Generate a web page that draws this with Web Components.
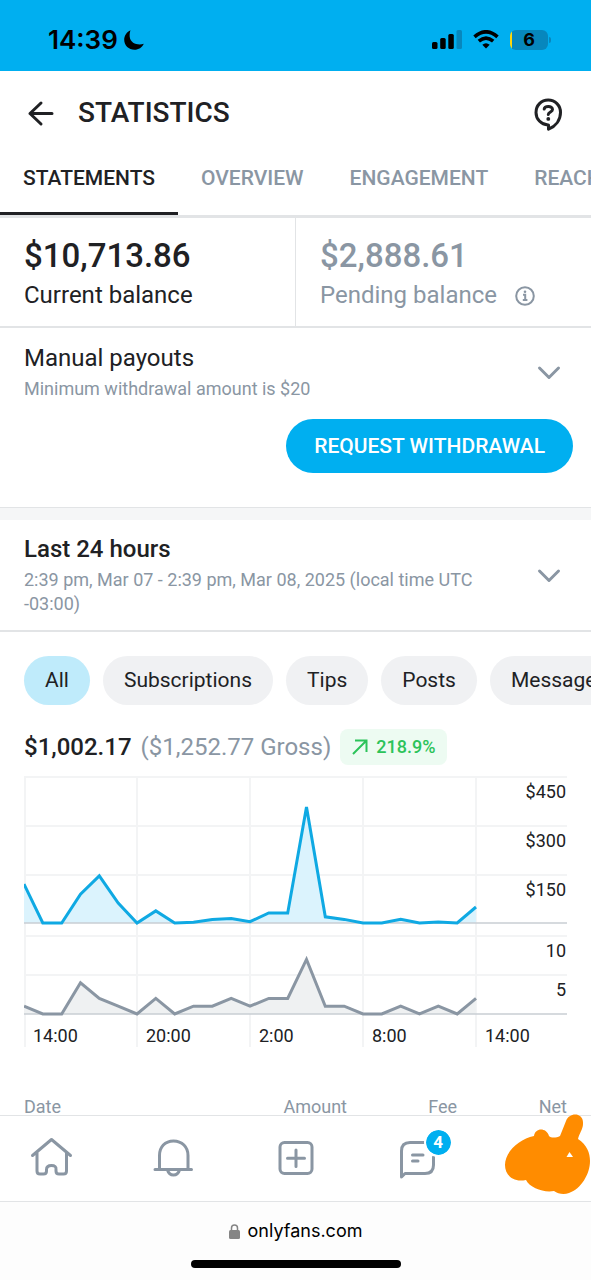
<!DOCTYPE html>
<html lang="en">
<head>
<meta charset="utf-8">
<meta name="viewport" content="width=device-width, initial-scale=1">
<title>Statistics</title>
<style>
  :root {
    --ink: #202124;
    --muted: #8a96a3;
    --line: #e2e4e6;
    --brand: #00aff0;
    --gutter: 24px;
  }
  body {
    margin: 0;
    font-family: Roboto, "Liberation Sans", sans-serif;
    color: var(--ink);
    background: #fff;
  }
</style>
</head>
<body>
<stats-app></stats-app>

<script>
const define = (name, markup, setup) => {
  const template = document.createElement('template');
  template.innerHTML = markup;
  customElements.define(name, class extends HTMLElement {
    constructor() {
      super();
      this.attachShadow({ mode: 'open' }).append(template.content.cloneNode(true));
    }
    connectedCallback() {
      if (setup) setup(this, this.shadowRoot);
    }
  });
};

define('status-bar', `
  <style>
    :host { display: flex; align-items: center; justify-content: space-between; height: 71px; box-sizing: border-box;
      padding: 8px 40px 0 48px; background: var(--brand); color: #000; font-family: Inter, sans-serif; }
    .clock, .signals { display: flex; align-items: center; }
    .clock { gap: 5px; font-size: 26px; font-weight: 600; line-height: 32px; }
    .signals { gap: 11px; }
    .battery { display: flex; align-items: center; }
    .cell { width: 38px; height: 20px; border-radius: 6px; background: linear-gradient(to right, #ffd60a 2px, #0787bd 2px);
      font-size: 18px; font-weight: 700; line-height: 20px; text-align: center; }
    .tip { width: 2px; height: 6px; margin-left: 1px; border-radius: 0 2px 2px 0; background: #0787bd; }
    svg { display: block; }
  </style>
  <div class="clock"><span>14:39</span>
    <svg width="22" height="22" viewBox="0 0 22 22"><path d="M7.5 1.2C4 2.700 1.200 6.500 1.200 10.800 1.200 16.600 5.800 20.800 11.500 20.800 15.600 20.800 19.200 18.600 20.800 14.800 15.500 16.400 7.500 15 6.700 7.700 6.500 5.300 6.800 3 7.500 1.200Z"/></svg>
  </div>
  <div class="signals">
    <svg width="30" height="19" viewBox="0 0 30 19"><rect y="12" width="5.500" height="7" rx="1.500"/><rect x="8.200" y="8" width="5.500" height="11" rx="1.500"/><rect x="16.300" y="4" width="5.500" height="15" rx="1.500"/><rect x="24.500" width="5.500" height="19" rx="1.500" fill="#0787bd"/></svg>
    <svg width="26" height="19" viewBox="0 0 26 19" fill="none" stroke="#000" stroke-width="3.600"><path d="M1.500 6.800Q13-3.200 24.500 6.800"/><path d="M5.800 11.200Q13 5 20.200 11.200"/><path d="M13 18.500 9.300 14.800Q13 11.800 16.700 14.800Z" fill="#000" stroke="none"/></svg>
    <div class="battery"><div class="cell">6</div><div class="tip"></div></div>
  </div>
`);

define('page-header', `
  <style>
    :host { display: flex; align-items: center; gap: 22px; height: 84px; padding: 0 var(--gutter); }
    h1 { flex: 1; margin: 0; font-size: 28px; font-weight: 500; line-height: 36px; }
    button { display: flex; padding: 0; border: 0; background: none; color: inherit; }
  </style>
  <button aria-label="Back"><svg width="32" height="32" viewBox="0 0 32 32" fill="none" stroke="currentColor" stroke-width="3" stroke-linecap="round" stroke-linejoin="round"><path d="M28 16.500H6M17 6 6 16.500l11 10.500"/></svg></button>
  <h1><slot></slot></h1>
  <button aria-label="Help"><svg width="38" height="36" viewBox="0 0 38 36" fill="none" stroke="currentColor" stroke-width="3" stroke-linecap="round" stroke-linejoin="round"><path d="M19 30C12 29.500 7 24 7 17.400 7 10.500 12.200 5.100 19.200 5.100S31.500 10.500 31.500 17.400C31.500 24.500 27 31 19.500 34.200V30Z"/><path d="M15.200 14.100C15.500 10.900 23.500 10.300 23.500 14.500 23.500 17 19.400 16.900 19.300 19.500"/><circle cx="19.300" cy="23.900" r="1.900" fill="currentColor" stroke="none"/></svg></button>
`);

define('tab-strip', `
  <style>
    :host { display: flex; overflow: hidden; border-bottom: 3px solid var(--line); }
  </style>
  <slot></slot>
`);

define('tab-link', `
  <style>
    :host { display: block; flex: none; }
    a { display: block; box-sizing: border-box; height: 60px; padding: 8px 23px 0; border-bottom: 3px solid transparent;
      color: var(--muted); font-size: 21px; font-weight: 500; line-height: 30px; text-decoration: none; }
    :host([selected]) a { color: var(--ink); border-color: var(--ink); }
  </style>
  <a href="#"><slot></slot></a>
`);

define('balance-cell', `
  <style>
    :host { display: block; flex: 1; padding: 17px var(--gutter) 12px; color: var(--ink); }
    :host([pending]) { color: var(--muted); border-left: 1px solid var(--line); }
    .sum { font-size: 33px; font-weight: 500; line-height: 42px; }
    .label { display: flex; align-items: center; gap: 18px; font-size: 24px; line-height: 37px; }
    svg { display: none; }
    :host([pending]) svg { display: block; }
  </style>
  <div class="sum"><slot name="sum"></slot></div>
  <div class="label"><slot></slot>
    <svg width="20" height="20" viewBox="0 0 20 20" fill="none" stroke="currentColor" stroke-width="2"><circle cx="10" cy="10" r="8.800"/><path d="M8 8.700h2.200V14M7.800 14h4.600"/><circle cx="10" cy="5.800" r="1.300" fill="currentColor" stroke="none"/></svg>
  </div>
`);

define('fold-row', `
  <style>
    :host { display: block; }
    button { display: flex; align-items: center; gap: 48px; width: 100%; padding: 11px var(--gutter) 14px; border: 0;
      background: none; color: var(--ink); font: inherit; text-align: left; }
    .text { flex: 1; }
    .title { font-size: 24px; line-height: 36px; }
    :host([strong]) .title { font-weight: 500; }
    .note { margin-top: 1px; color: var(--muted); font-size: 18px; line-height: 24px; }
    svg { flex: none; color: var(--muted); margin-right: 6px; padding-top: 5px; }
  </style>
  <button>
    <span class="text"><div class="title"><slot name="title"></slot></div><div class="note"><slot></slot></div></span>
    <svg width="24" height="16" viewBox="0 0 24 16" fill="none" stroke="currentColor" stroke-width="3" stroke-linecap="round" stroke-linejoin="round"><path d="M2.500 3 12 12.500 21.500 3"/></svg>
  </button>
`);

define('pill-button', `
  <style>
    :host { display: block; }
    button { height: 54px; padding: 0 28px; border: 0; border-radius: 27px; background: var(--brand); color: #fff;
      font: 500 21px/52px Roboto, sans-serif; }
  </style>
  <button><slot></slot></button>
`);

define('filter-chip', `
  <style>
    :host { display: block; flex: none; }
    button { display: flex; align-items: flex-start; height: 49px; padding: 0 21px; border: 0; border-radius: 25px; background: #f0f1f3; color: var(--ink);
      font: 400 21px/48px Roboto, sans-serif; white-space: nowrap; }
    :host([selected]) button { background: #bfebfb; }
  </style>
  <button><slot></slot></button>
`);

define('earnings-summary', `
  <style>
    :host { display: flex; align-items: center; gap: 9px; padding: 0 var(--gutter); font-size: 24px; line-height: 36px; }
    b { font-weight: 500; }
    .gross { color: var(--muted); }
    .trend { display: flex; align-items: center; gap: 8px; height: 36px; padding: 0 12px; border-radius: 8px;
      background: #edfbf2; color: #2cc35a; font-size: 18px; font-weight: 500; }
  </style>
  <b><slot name="net"></slot></b>
  <span class="gross"><slot name="gross"></slot></span>
  <span class="trend"><svg width="16" height="16" viewBox="0 0 16 16" fill="none" stroke="currentColor" stroke-width="2"><path d="M1 15 14.500 1.500M3 1.500H14.500V13"/></svg><slot name="trend"></slot></span>
`);

define('trend-chart', `
  <style>
    :host { display: block; padding: 0 var(--gutter); }
    svg { display: block; width: 100%; height: auto; }
    text { font-size: 18px; fill: var(--ink); }
    .end { text-anchor: end; }
    .grid { stroke: #f3f4f5; stroke-width: 2; }
    .axis { stroke: #c8ced3; stroke-width: 1.500; }
    .line { fill: none; stroke-width: 3; }
  </style>
  <svg viewBox="0 0 543 272" role="img" aria-label="Earnings and transactions by hour"></svg>
`, (host, root) => {
  const step = 452 / 24;
  const money = [119, 0, 0, 88, 144, 61, 0, 37, 0, 2, 11, 14, 4, 31, 31, 355, 19, 11, 0, 0, 11, 0, 3, 0, 49];
  const count = [1, 0, 0, 4, 2, 1, 0, 2, 0, 1, 1, 2, 1, 2, 2, 7, 1, 1, 0, 0, 1, 0, 1, 0, 2];
  const parts = [];
  for (const y of [1, 50, 99, 160, 199]) parts.push(`<path class="grid" d="M0 ${y}H543"/>`);
  for (let i = 0; i < 5; i++) parts.push(`<path class="grid" d="M${i ? i * 113 : 1} 0V271"/>`);
  const series = (data, base, scale, stroke, fill) => {
    const points = data.map((v, i) => `${(i * step).toFixed(1)} ${(base - v * scale).toFixed(1)}`).join('L');
    parts.push(`<path fill="${fill}" d="M0 ${base}L${points}V${base}Z"/>`,
      `<path class="axis" d="M0 ${base}H543"/>`,
      `<path class="line" stroke="${stroke}" d="M${points}"/>`);
  };
  series(money, 147, 0.327, '#0fa9e3', '#dbf3fd');
  series(count, 238, 7.8, '#8a96a3', '#eff1f2');
  [['$450', 22], ['$300', 71], ['$150', 120], ['10', 181], ['5', 220]].forEach(([t, y]) =>
    parts.push(`<text class="end" x="542" y="${y}">${t}</text>`));
  ['14:00', '20:00', '2:00', '8:00', '14:00'].forEach((t, i) =>
    parts.push(`<text x="${9 + i * 113}" y="266">${t}</text>`));
  root.querySelector('svg').innerHTML = parts.join('');
});

define('statement-table', `
  <style>
    :host { display: block; padding: 0 var(--gutter); }
    table { width: 100%; border-collapse: collapse; table-layout: fixed; }
    th { width: 110px; padding: 0; color: var(--muted); font-size: 18px; font-weight: 400; line-height: 14px; text-align: right; }
    th:first-child { width: auto; text-align: left; }
  </style>
  <table><thead><tr><th>Date</th><th>Amount</th><th>Fee</th><th>Net</th></tr></thead></table>
`);

define('bottom-nav', `
  <style>
    :host { display: block; border-top: 1px solid var(--line); border-bottom: 1px solid var(--line); background: #fff; }
    nav { display: flex; justify-content: space-between; padding: 13px var(--gutter) 17px; }
    a { position: relative; display: flex; justify-content: center; align-items: center; width: 54px; height: 55px; color: var(--muted); }
    .badge { position: absolute; top: -1px; right: -8px; width: 25px; height: 25px; border: 2px solid #fff; border-radius: 50%;
      background: var(--brand); background-clip: padding-box; color: #fff; font-size: 17px; font-weight: 700; line-height: 25px; text-align: center; }
    .avatar svg { position: absolute; top: -15px; right: -24px; }
  </style>
  <nav>
    <a href="#" aria-label="Home"><svg width="44" height="44" viewBox="0 0 44 44" fill="none" stroke="currentColor" stroke-width="3" stroke-linecap="round" stroke-linejoin="round"><path d="M3.500 20.500 22.500 4.500 41.500 20.500M8 17.500V36Q8 39 11 39H14.500Q17.500 39 17.500 36V34.500Q17.500 30.500 22.500 30.500T27 34.500V36Q27 39 30 39H34.500Q37.500 39 37.500 36V17.500"/></svg></a>
    <a href="#" aria-label="Notifications"><svg width="44" height="44" viewBox="0 0 44 44" fill="none" stroke="currentColor" stroke-width="3" stroke-linecap="round" stroke-linejoin="round"><path d="M4 34.500H40.500M8.500 34V20.500C8.500 12 14 6 22.500 6S37 12 37 20.500V34M16.500 35Q18 40 22.500 40T28.500 35"/></svg></a>
    <a href="#" aria-label="New post"><svg width="44" height="44" viewBox="0 0 44 44" fill="none" stroke="currentColor" stroke-width="3" stroke-linecap="round" stroke-linejoin="round"><rect x="6" y="7.500" width="32" height="31" rx="4.500"/><path d="M22 15V31.500M13.500 23.200H30.500"/></svg></a>
    <a href="#" aria-label="Messages, 4 unread"><svg width="44" height="44" viewBox="0 0 44 44" fill="none" stroke="currentColor" stroke-width="3" stroke-linecap="round" stroke-linejoin="round"><path d="M28 7.500H14Q5.500 7.500 5.500 16V42L9 38.500H29Q37.500 38.500 37.500 30V22M16.500 20H27M16.500 26H22"/></svg><span class="badge">4</span></a>
    <a href="#" class="avatar" aria-label="Profile"><svg width="87" height="82" viewBox="0 0 87 82" fill="#ff8c00"><path d="M1 51C1 38 15 25 30 22 31 14 42 13 45 22 47 24 52 24 56 22L62 7C65-2 80-2 79 10 79 15 75 20 74 25 83 31 86 39 86 47 86 60 77 75 65 79 60 81 54 80 50 77 40 79 26 74 22 66 8 69 1 60 1 51Z"/><path d="M65.500 38 69 43H62.500Z" fill="#fff"/></svg></a>
  </nav>
`);

define('browser-bar', `
  <style>
    :host { display: flex; flex-direction: column; align-items: center; gap: 15px; padding: 15px 0 12px; background: #fdfdfd;
      color: #000; font: 400 18px/28px Inter, sans-serif; }
    .address { display: flex; align-items: center; gap: 8px; }
    .handle { width: 210px; height: 8px; border-radius: 4px; background: #000; }
  </style>
  <div class="address"><svg width="11" height="15" viewBox="0 0 11 15"><path d="M2.500 7V4Q2.500 1 5.500 1T8.500 4V7" fill="none" stroke="#858585" stroke-width="1.500"/><rect y="6" width="11" height="9" rx="1.500" fill="#858585"/></svg><span><slot></slot></span></div>
  <div class="handle"></div>
`);

define('stats-app', `
  <style>
    :host { display: flex; flex-direction: column; min-height: 100vh; overflow: hidden; }
    main { flex: 1; }
    .balances { display: flex; border-bottom: 2px solid var(--line); }
    .payouts { padding-top: 1px; }
    .request { display: flex; justify-content: flex-end; padding: 4px 18px 34px; border-bottom: 1px solid var(--line); }
    .band { height: 12px; background: #f5f6f7; }
    .period { border-bottom: 2px solid var(--line); }
    .chips { display: flex; gap: 13px; overflow: hidden; padding: 24px 0 24px var(--gutter); }
    trend-chart { margin: 11px 0 52px; }
  </style>
  <status-bar></status-bar>
  <page-header>STATISTICS</page-header>
  <tab-strip>
    <tab-link selected>STATEMENTS</tab-link><tab-link>OVERVIEW</tab-link><tab-link>ENGAGEMENT</tab-link><tab-link>REACH</tab-link>
  </tab-strip>
  <main>
    <section class="balances">
      <balance-cell><span slot="sum">$10,713.86</span>Current balance</balance-cell>
      <balance-cell pending><span slot="sum">$2,888.61</span>Pending balance</balance-cell>
    </section>
    <fold-row class="payouts"><span slot="title">Manual payouts</span>Minimum withdrawal amount is $20</fold-row>
    <div class="request"><pill-button>REQUEST WITHDRAWAL</pill-button></div>
    <div class="band"></div>
    <fold-row strong class="period"><span slot="title">Last 24 hours</span>2:39 pm, Mar 07 - 2:39 pm, Mar 08, 2025 (local time UTC -03:00)</fold-row>
    <div class="chips">
      <filter-chip selected>All</filter-chip><filter-chip>Subscriptions</filter-chip><filter-chip>Tips</filter-chip><filter-chip>Posts</filter-chip><filter-chip>Messages</filter-chip>
    </div>
    <earnings-summary><span slot="net">$1,002.17</span><span slot="gross">($1,252.77 Gross)</span><span slot="trend">218.9%</span></earnings-summary>
    <trend-chart></trend-chart>
    <statement-table></statement-table>
  </main>
  <bottom-nav></bottom-nav>
  <browser-bar>onlyfans.com</browser-bar>
`);
</script>
</body>
</html>
